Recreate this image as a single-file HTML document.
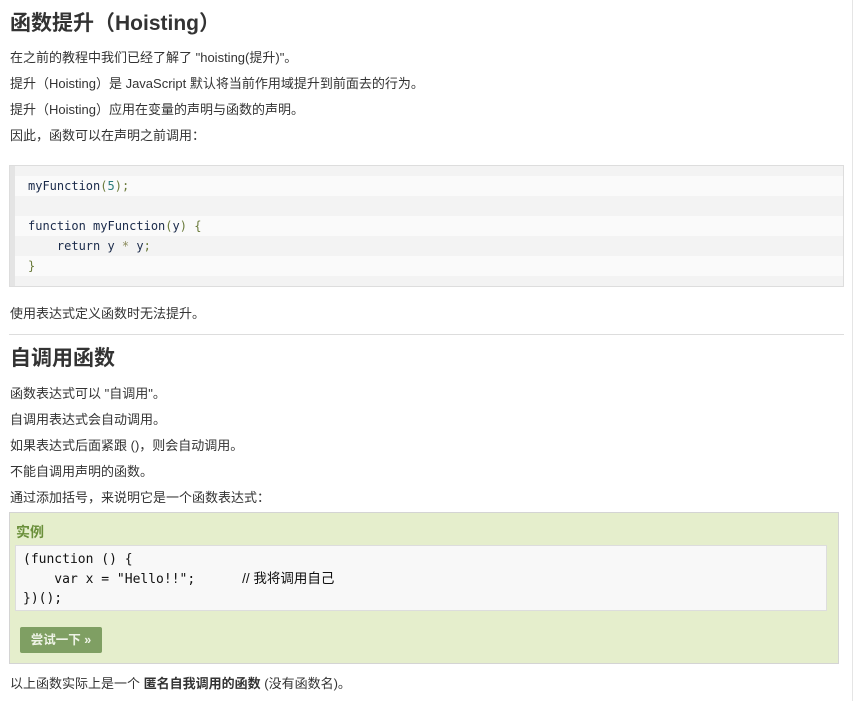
<!DOCTYPE html>
<html><head><meta charset="utf-8"><style>
body{margin:0;width:856px;height:701px;background:#fff;position:relative;overflow:hidden;font-family:"Liberation Sans","Noto Sans CJK SC",sans-serif;color:#333}
.a{position:absolute;white-space:nowrap}
p.a{margin:0;font-size:13px;line-height:16px}
h2.a{margin:0;font-size:21px;font-weight:bold;line-height:28px;color:#333}
.mono{font-family:"DejaVu Sans Mono","Liberation Mono",monospace}
.vl{position:absolute;left:852px;top:0;width:1px;height:701px;background:#e5e5e5}
</style></head><body>
<div class="vl"></div>
<h2 class="a" style="left:10px;top:10px">函数提升（Hoisting）</h2>
<p class="a" style="left:10px;top:50px">在之前的教程中我们已经了解了 "hoisting(提升)"。</p>
<p class="a" style="left:10px;top:76px">提升（Hoisting）是 JavaScript 默认将当前作用域提升到前面去的行为。</p>
<p class="a" style="left:10px;top:102px">提升（Hoisting）应用在变量的声明与函数的声明。</p>
<p class="a" style="left:10px;top:128px">因此，函数可以在声明之前调用：</p>

<div class="a" style="left:9px;top:165px;width:833px;height:120px;border:1px solid #ddd;background:#f3f3f3">
 <div style="position:absolute;left:0;top:0;width:5px;height:120px;background:#e4e4e4"></div>
 <div style="position:absolute;left:5px;top:10px;right:0;height:20px;background:#fafafa"></div>
 <div style="position:absolute;left:5px;top:50px;right:0;height:20px;background:#fafafa"></div>
 <div style="position:absolute;left:5px;top:90px;right:0;height:20px;background:#fafafa"></div>
 <div class="mono" style="position:absolute;left:18px;top:10px;font-size:12px;line-height:20px;white-space:pre;color:#1a2a4a">myFunction<span style="color:#6a7a3a">(</span><span style="color:#2a7a7a">5</span><span style="color:#6a7a3a">);</span>

function myFunction<span style="color:#6a7a3a">(</span>y<span style="color:#6a7a3a">) {</span>
    return y <span style="color:#8a8a5a">*</span> y<span style="color:#6a7a3a">;</span>
<span style="color:#6a7a3a">}</span></div>
</div>

<p class="a" style="left:10px;top:306px">使用表达式定义函数时无法提升。</p>
<div class="a" style="left:9px;top:334px;width:835px;height:1px;background:#ddd"></div>
<h2 class="a" style="left:10px;top:345px">自调用函数</h2>
<p class="a" style="left:10px;top:386px">函数表达式可以 "自调用"。</p>
<p class="a" style="left:10px;top:412px">自调用表达式会自动调用。</p>
<p class="a" style="left:10px;top:438px">如果表达式后面紧跟 ()，则会自动调用。</p>
<p class="a" style="left:10px;top:464px">不能自调用声明的函数。</p>
<p class="a" style="left:10px;top:490px">通过添加括号，来说明它是一个函数表达式：</p>

<div class="a" style="left:9px;top:512px;width:828px;height:150px;border:1px solid #d4d4d4;background:#e5eecc">
 <div style="position:absolute;left:6px;top:9px;font-size:14px;font-weight:bold;color:#6a8f3a">实例</div>
 <div class="mono" style="position:absolute;left:5px;top:32px;width:812px;height:66px;background:#f8f8f8;border:1px solid #ddd;font-size:13px;line-height:19px;white-space:pre;color:#111;padding:4px 0 0 7px;box-sizing:border-box">(function () {
    var x = "Hello!!";      <span style="font-family:'Liberation Sans','Noto Sans CJK SC',sans-serif;font-size:13.5px">// 我将调用自己</span>
})();</div>
 <div style="position:absolute;left:10px;top:114px;width:82px;height:26px;background:#7f9f63;border-radius:2px;color:#eef3e6;font-size:12.5px;font-weight:bold;line-height:26px;text-align:center">尝试一下 »</div>
</div>

<p class="a" style="left:10px;top:676px">以上函数实际上是一个 <b>匿名自我调用的函数</b> (没有函数名)。</p>
</body></html>
